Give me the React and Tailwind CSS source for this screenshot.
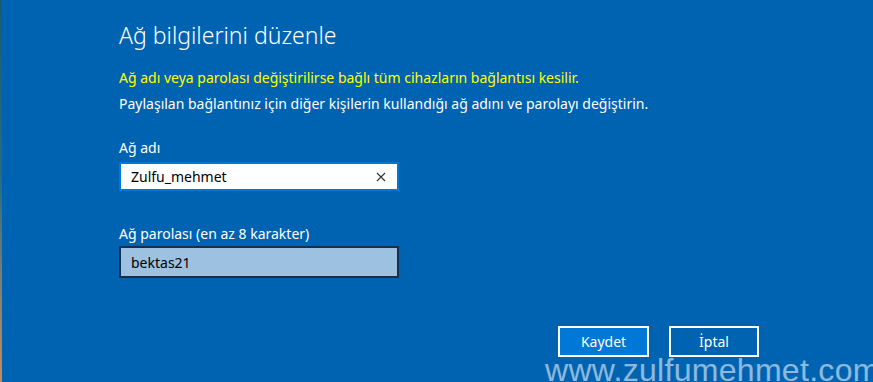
export default function App() {
  return (
    <div className="relative h-[382px] w-[873px] overflow-hidden bg-[#0063b1] font-['Noto_Sans',sans-serif]">
      <div className="absolute left-0 top-0 h-full w-[2px] bg-gradient-to-b from-[#1d5a6a] via-[#2a6f7e] to-[#c88a5a]" />
      <div className="flex flex-col pl-[119px] pt-[21px] text-white">
        <h1 className="text-[23px] font-light leading-[28px]">Ağ bilgilerini düzenle</h1>
        <p className="mt-[19px] text-[14px] leading-[20px] text-[#ffff00]">
          Ağ adı veya parolası değiştirilirse bağlı tüm cihazların bağlantısı kesilir.
        </p>
        <p className="mt-[6px] text-[14px] leading-[20px]">
          Paylaşılan bağlantınız için diğer kişilerin kullandığı ağ adını ve parolayı değiştirin.
        </p>

        <label className="mt-[24px] text-[14px] leading-[20px]">Ağ adı</label>
        <div className="mt-[4px] flex h-[29px] w-[280px] items-center border-2 border-[#0078d7] bg-white pl-[10px] pr-[10px] text-black">
          <span className="flex-1 text-[14px]">Zulfu_mehmet</span>
          <svg width="10" height="10" viewBox="0 0 10 10" className="mr-[1px]">
            <path d="M1 1L9 9M9 1L1 9" stroke="#333" strokeWidth="1.1" />
          </svg>
        </div>

        <label className="mt-[33px] text-[14px] leading-[20px]">Ağ parolası (en az 8 karakter)</label>
        <div className="mt-[2px] flex h-[32px] w-[280px] items-center border-2 border-[#15304f] bg-[#9dc1e1] pl-[10px] text-black">
          <span className="text-[14px]">bektas21</span>
        </div>

        <div className="mt-[48px] flex gap-[20px] pl-[439px]">
          <button className="h-[31px] w-[91px] border-2 border-white bg-[#0078d7] text-[14px] text-white">Kaydet</button>
          <button className="h-[31px] w-[90px] border-2 border-white text-[14px] text-white">İptal</button>
        </div>
      </div>
      <div className="absolute left-[545px] top-[354px] whitespace-nowrap font-['Liberation_Sans',sans-serif] text-[32px] leading-none tracking-[0.3px] text-white/55">
        www.zulfumehmet.com
      </div>
    </div>
  );
}
